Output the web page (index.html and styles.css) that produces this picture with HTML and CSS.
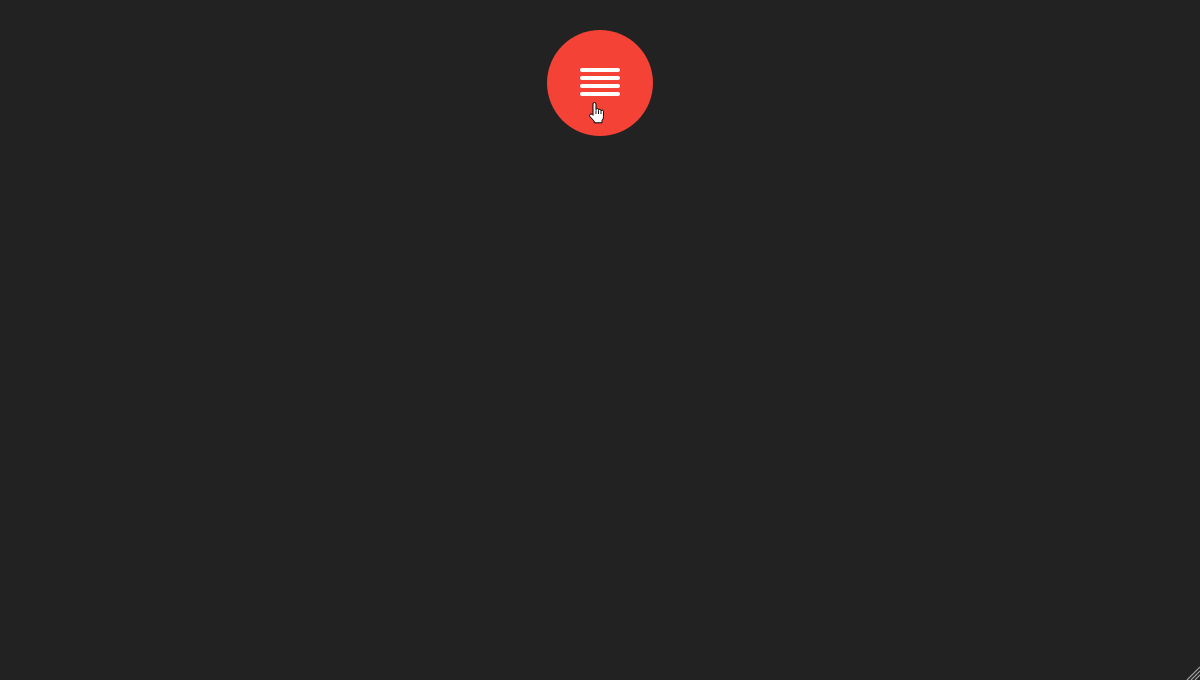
FILE: index.html
```html
<!DOCTYPE html>
<html>
<head>
<meta charset="utf-8">
<link rel="stylesheet" href="styles.css">
</head>
<body>
<div class="stage">
  <button class="fab" aria-label="Menu">
    <span class="bars">
      <span class="bar"></span>
      <span class="bar"></span>
      <span class="bar"></span>
      <span class="bar"></span>
    </span>
    <svg class="cursor" width="17" height="22" viewBox="0 0 17 22">
      <path d="M5 2Q5 .5 6.5 .5Q8 .5 8 2V7.6Q8 6.5 9.25 6.5Q10.5 6.5 10.5 7.8V8.4Q10.5 7.3 11.75 7.3Q13 7.3 13 8.6V9.3Q13 8.2 14.25 8.2Q15.5 8.2 15.5 9.5V14.5Q15.5 17 14 18.5V20.8H6.2V19.2L2 14.6Q1 13.3 2 12.3Q3 11.4 4 12.3L5 13.3Z" fill="#fff" stroke="#000" stroke-width="1" stroke-linejoin="round"/>
      <path d="M8 8.2V12M10.5 8.8V12M13 9.6V12" stroke="#000" stroke-width="0.9" fill="none"/>
    </svg>
  </button>
</div>
<svg class="grip" width="14" height="14" viewBox="0 0 14 14">
  <path d="M14 1L1 14M14 5L5 14M14 9L9 14" stroke="#a0a0a0" stroke-width="1.2"/>
</svg>
</body>
</html>
```
FILE: styles.css
```css
html, body {
  margin: 0;
  padding: 0;
  height: 100%;
  background: #222222;
  font-family: "Liberation Sans", Arial, sans-serif;
}
.stage {
  display: flex;
  justify-content: center;
  padding-top: 30px;
}
.fab {
  position: relative;
  width: 106px;
  height: 106px;
  border: none;
  border-radius: 50%;
  background: #f44336;
  padding: 0;
  display: flex;
  justify-content: center;
  align-items: flex-start;
}
.bars {
  margin-top: 38px;
  display: flex;
  flex-direction: column;
  gap: 4px;
}
.bar {
  display: block;
  width: 40px;
  height: 4px;
  border-radius: 2px;
  background: #ffffff;
}
.cursor {
  position: absolute;
  left: 41px;
  top: 72px;
}
.grip {
  position: fixed;
  right: 0;
  bottom: 0;
}
```
